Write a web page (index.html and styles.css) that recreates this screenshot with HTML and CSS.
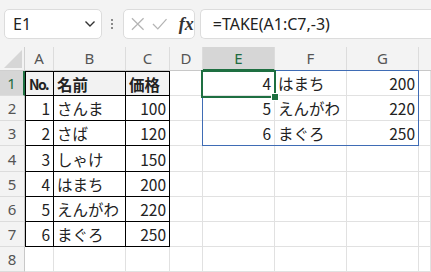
FILE: index.html
```html
<!DOCTYPE html>
<html lang="ja">
<head>
<meta charset="utf-8">
<link rel="stylesheet" href="styles.css">
</head>
<body>
<div class="app">
  <div class="fbar">
    <div class="namebox">
      <span class="nb-text">E1</span>
      <svg class="chev" width="12" height="8" viewBox="0 0 12 8"><path d="M1.5 1.5 L6 6 L10.5 1.5" fill="none" stroke="#333" stroke-width="1.4"/></svg>
    </div>
    <div class="dots"><span></span><span></span><span></span></div>
    <div class="fxbox">
      <svg width="16" height="16" viewBox="0 0 16 16"><path d="M2 2 L14 14 M14 2 L2 14" stroke="#b4b4b4" stroke-width="1.3" fill="none"/></svg>
      <svg width="16" height="16" viewBox="0 0 16 16"><path d="M1 8 L6 13 L15 3" stroke="#b4b4b4" stroke-width="1.3" fill="none"/></svg>
      <span class="fx">fx</span>
    </div>
    <div class="formula">=TAKE(A1:C7,-3)</div>
  </div>
  <div class="sheet">
    <div class="corner"><svg width="18" height="18" viewBox="0 0 18 18"><path d="M18 0 L18 18 L0 18 Z" fill="#d6d6d6"/></svg></div>
    <div class="ch">A</div><div class="ch">B</div><div class="ch">C</div><div class="ch">D</div>
    <div class="ch sel">E</div><div class="ch">F</div><div class="ch">G</div><div class="ch last"></div>

    <div class="rh selr">1</div>
    <div class="c t th tl tt"><span class="no">No.</span></div>
    <div class="c t th tt">名前</div>
    <div class="c t th tt">価格</div>
    <div class="c"></div>
    <div class="c r">4</div><div class="c">はまち</div><div class="c r">200</div><div class="c"></div>

    <div class="rh">2</div>
    <div class="c t tl r">1</div><div class="c t">さんま</div><div class="c t r">100</div><div class="c"></div>
    <div class="c r">5</div><div class="c">えんがわ</div><div class="c r">220</div><div class="c"></div>

    <div class="rh">3</div>
    <div class="c t tl r">2</div><div class="c t">さば</div><div class="c t r">120</div><div class="c"></div>
    <div class="c r">6</div><div class="c">まぐろ</div><div class="c r">250</div><div class="c"></div>

    <div class="rh">4</div>
    <div class="c t tl r">3</div><div class="c t">しゃけ</div><div class="c t r">150</div><div class="c"></div>
    <div class="c"></div><div class="c"></div><div class="c"></div><div class="c"></div>

    <div class="rh">5</div>
    <div class="c t tl r">4</div><div class="c t">はまち</div><div class="c t r">200</div><div class="c"></div>
    <div class="c"></div><div class="c"></div><div class="c"></div><div class="c"></div>

    <div class="rh">6</div>
    <div class="c t tl r">5</div><div class="c t">えんがわ</div><div class="c t r">220</div><div class="c"></div>
    <div class="c"></div><div class="c"></div><div class="c"></div><div class="c"></div>

    <div class="rh">7</div>
    <div class="c t tl r">6</div><div class="c t">まぐろ</div><div class="c t r">250</div><div class="c"></div>
    <div class="c"></div><div class="c"></div><div class="c"></div><div class="c"></div>

    <div class="rh">8</div>
    <div class="c"></div><div class="c"></div><div class="c"></div><div class="c"></div>
    <div class="c"></div><div class="c"></div><div class="c"></div><div class="c"></div>

    <div class="spill"></div>
    <div class="active"><span class="handle"></span></div>
  </div>
</div>
</body>
</html>
```
FILE: styles.css
```css
* { box-sizing: border-box; }
html, body { margin: 0; padding: 0; }
body {
  width: 431px;
  height: 272px;
  overflow: hidden;
  background: #fff;
  font-family: "Noto Sans CJK JP", "Noto Sans", sans-serif;
}
.app { width: 431px; height: 272px; overflow: hidden; }

.fbar {
  height: 47px;
  background: #f3f3f3;
  display: flex;
  align-items: flex-start;
  padding: 9px 0 0 4px;
}
.namebox {
  width: 101px;
  height: 30px;
  background: #fff;
  border: 1px solid #dcdcdc;
  border-radius: 5px;
  display: flex;
  align-items: center;
  justify-content: space-between;
  padding: 0 5px 0 8px;
}
.nb-text {
  font-family: "Noto Sans", sans-serif;
  font-size: 16px;
  color: #222;
}
.dots {
  width: 22px;
  height: 30px;
  display: flex;
  flex-direction: column;
  align-items: center;
  justify-content: center;
  gap: 2px;
}
.dots span { width: 2px; height: 2px; background: #8a8a8a; display: block; }
.fxbox {
  width: 72px;
  height: 30px;
  background: #fff;
  border: 1px solid #dcdcdc;
  border-radius: 5px;
  display: flex;
  align-items: center;
  gap: 7px;
  padding-left: 6px;
}
.fx {
  font-family: "Liberation Serif", "DejaVu Serif", serif;
  font-style: italic;
  font-weight: bold;
  font-size: 18px;
  color: #333;
  margin-left: 4px;
}
.formula {
  margin-left: 5px;
  width: 240px;
  height: 30px;
  background: #fff;
  border: 1px solid #dcdcdc;
  border-right: none;
  border-radius: 5px 0 0 5px;
  font-family: "Noto Sans", sans-serif;
  font-size: 16px;
  color: #222;
  display: flex;
  align-items: center;
  padding-left: 12px;
}

.sheet {
  position: relative;
  display: grid;
  grid-template-columns: 25px 29px 72px 44px 33px 72px 72px 72px 1fr;
  grid-template-rows: 24px 25px 25px 25px 26px 25px 25px 25px 25px;
  font-size: 15.5px;
  color: #222;
}
.corner {
  background: #f3f3f3;
  border-right: 1px solid #d0d0d0;
  border-bottom: 1px solid #d0d0d0;
  display: flex;
  align-items: flex-end;
  justify-content: flex-end;
  padding: 0 2px 2px 0;
}
.ch {
  background: #f3f3f3;
  border-right: 1px solid #dcdcdc;
  border-bottom: 1px solid #c8c8c8;
  text-align: center;
  font-family: "Noto Sans", sans-serif;
  font-size: 15px;
  line-height: 23px;
  color: #555;
}
.ch.sel {
  background: #d6d6d6;
  color: #1e6b40;
  border-bottom: 2px solid #1e6f41;
}
.ch.last { border-right: none; }
.rh {
  background: #f3f3f3;
  border-right: 1px solid #c8c8c8;
  border-bottom: 1px solid #dcdcdc;
  font-family: "Noto Sans", sans-serif;
  font-size: 15px;
  color: #555;
  display: flex;
  align-items: center;
  justify-content: center;
}
.rh.selr {
  background: #d6d6d6;
  color: #1e6b40;
  border-right: 2px solid #1e6f41;
}
.c {
  border-right: 1px solid #e1e1e1;
  border-bottom: 1px solid #e1e1e1;
  display: flex;
  align-items: center;
  padding: 0 3px;
  white-space: nowrap;
  overflow: hidden;
}
.c.r { justify-content: flex-end; }
.c.t { border-right-color: #000; border-bottom-color: #000; }
.c.tl { border-left: 1px solid #000; }
.c.tt { border-top: 1px solid #000; }
.c.th { background: #f2f2f2; font-weight: bold; }
.no {
  font-size: 14px;
  letter-spacing: -1.5px;
  font-weight: bold;
}

.spill {
  position: absolute;
  left: 202px;
  top: 23px;
  width: 217px;
  height: 76px;
  border: 1px solid #3f6cb5;
  pointer-events: none;
}
.active {
  position: absolute;
  left: 201px;
  top: 23px;
  width: 75px;
  height: 28px;
  border: 2px solid #1e6f41;
  pointer-events: none;
}
.handle {
  position: absolute;
  right: -5px;
  bottom: -5px;
  width: 6px;
  height: 6px;
  background: #1e6f41;
  border: 1px solid #fff;
  box-sizing: content-box;
}
```
